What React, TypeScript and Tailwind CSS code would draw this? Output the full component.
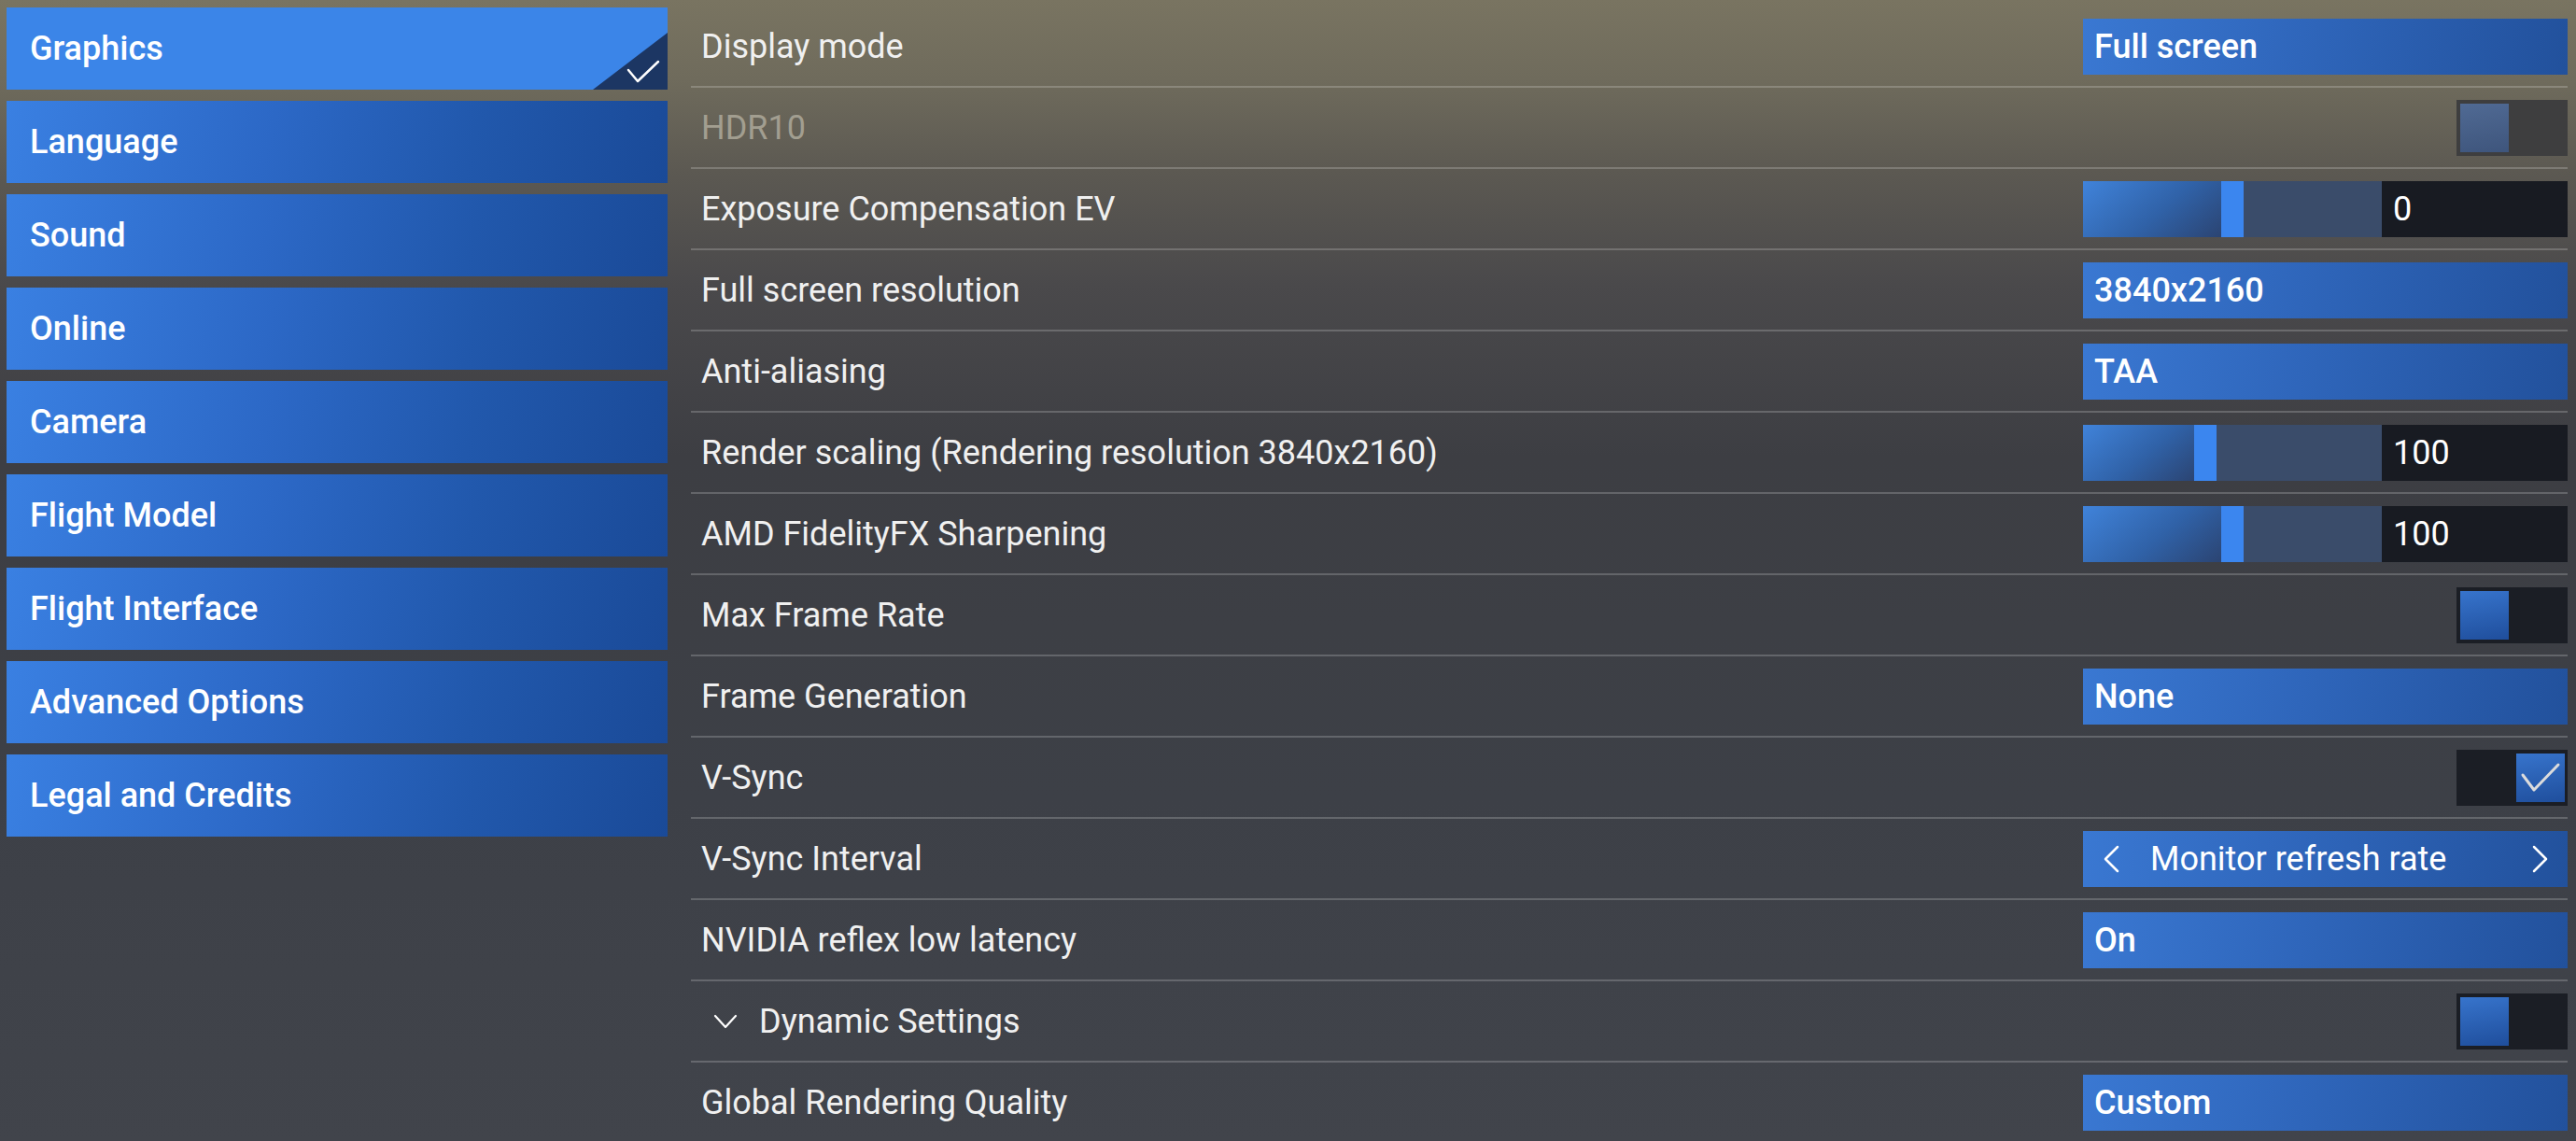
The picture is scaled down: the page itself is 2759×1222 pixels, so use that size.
import React from 'react';

type Row =
  | { kind: 'select'; label: string; value: string }
  | { kind: 'toggle'; label: string; on: boolean; disabled?: boolean }
  | { kind: 'slider'; label: string; thumb: number; value: string }
  | { kind: 'stepper'; label: string; value: string }
  | { kind: 'section'; label: string; on: boolean };

const menu = [
  'Graphics',
  'Language',
  'Sound',
  'Online',
  'Camera',
  'Flight Model',
  'Flight Interface',
  'Advanced Options',
  'Legal and Credits',
];

const rows: Row[] = [
  { kind: 'select', label: 'Display mode', value: 'Full screen' },
  { kind: 'toggle', label: 'HDR10', on: false, disabled: true },
  { kind: 'slider', label: 'Exposure Compensation EV', thumb: 148, value: '0' },
  { kind: 'select', label: 'Full screen resolution', value: '3840x2160' },
  { kind: 'select', label: 'Anti-aliasing', value: 'TAA' },
  { kind: 'slider', label: 'Render scaling (Rendering resolution 3840x2160)', thumb: 119, value: '100' },
  { kind: 'slider', label: 'AMD FidelityFX Sharpening', thumb: 148, value: '100' },
  { kind: 'toggle', label: 'Max Frame Rate', on: false },
  { kind: 'select', label: 'Frame Generation', value: 'None' },
  { kind: 'toggle', label: 'V-Sync', on: true },
  { kind: 'stepper', label: 'V-Sync Interval', value: 'Monitor refresh rate' },
  { kind: 'select', label: 'NVIDIA reflex low latency', value: 'On' },
  { kind: 'section', label: 'Dynamic Settings', on: false },
  { kind: 'select', label: 'Global Rendering Quality', value: 'Custom' },
];

function Toggle({ on, disabled }: { on: boolean; disabled?: boolean }) {
  return (
    <div
      className={`w-[119px] h-[60px] p-[4px] flex ${on ? 'justify-end pr-[3px]' : 'justify-start'} ${
        disabled ? 'bg-[#3e3e3f]' : 'bg-[#1b1e25]'
      }`}
    >
      <div
        className={`w-[52px] h-[52px] flex items-center justify-center ${
          disabled
            ? 'bg-[linear-gradient(170deg,#506a94,#3e557c)]'
            : 'bg-[linear-gradient(170deg,#3774cc,#1f4e9c)]'
        }`}
      >
        {on && (
          <svg width="52" height="52" viewBox="0 0 52 52" fill="none">
            <path d="M7 23 L19 39 L45 12" stroke="#dcdcdc" strokeWidth="3" strokeLinecap="round" strokeLinejoin="round" />
          </svg>
        )}
      </div>
    </div>
  );
}

function Slider({ thumb, value }: { thumb: number; value: string }) {
  return (
    <div className="w-[519px] h-[60px] flex">
      <div className="w-[320px] h-full flex bg-[#3a4c6a]">
        <div className="h-full bg-[linear-gradient(140deg,#4083da_0%,#3062a8_55%,#2b4472_100%)]" style={{ width: thumb }} />
        <div className="w-[24px] h-full bg-[#3b86ef]" />
      </div>
      <div className="flex-1 h-full bg-[#181b22] flex items-center pl-[12px] text-[36px] text-white">{value}</div>
    </div>
  );
}

function Select({ value }: { value: string }) {
  return (
    <div className="w-[519px] h-[60px] flex items-center pl-[12px] bg-[linear-gradient(100deg,#3a78d2_0%,#2f66bb_45%,#22519c_100%)] text-[36px] font-medium text-white">
      {value}
    </div>
  );
}

function Stepper({ value }: { value: string }) {
  return (
    <div className="w-[519px] h-[60px] flex items-center pl-[20px] pr-[19px] bg-[linear-gradient(100deg,#3a78d2_0%,#2f66bb_45%,#22519c_100%)] text-[36px] text-white">
      <svg width="20" height="30" viewBox="0 0 20 30" fill="none">
        <path d="M17 2 L4 15 L17 28" stroke="white" strokeWidth="2.5" strokeLinecap="round" strokeLinejoin="round" />
      </svg>
      <span className="ml-[32px] flex-1">{value}</span>
      <svg width="20" height="30" viewBox="0 0 20 30" fill="none">
        <path d="M3 2 L16 15 L3 28" stroke="white" strokeWidth="2.5" strokeLinecap="round" strokeLinejoin="round" />
      </svg>
    </div>
  );
}

export default function App() {
  return (
    <div className="w-[2759px] h-[1222px] overflow-hidden flex font-[Roboto,sans-serif] bg-[linear-gradient(180deg,#797461_0%,#6f6b5c_7%,#5c5952_15%,#4a494b_25%,#3d3e43_40%,#3d4047_70%,#41444b_100%)]">
      <div className="w-[740px] shrink-0 pl-[7px] pt-[8px] flex flex-col gap-[12px]">
        {menu.map((m, i) => (
          <div
            key={m}
            className={`relative w-[708px] h-[88px] flex items-center pl-[25px] text-[36px] font-medium text-white ${
              i === 0
                ? 'bg-[#3b85e8]'
                : 'bg-[linear-gradient(105deg,#3a80e2_0%,#2c68c6_40%,#2158ac_70%,#1a4a98_100%)]'
            }`}
          >
            {m}
            {i === 0 && (
              <svg className="absolute right-0 bottom-0" width="80" height="61" viewBox="0 0 80 61" fill="none">
                <polygon points="0,61 80,0 80,61" fill="#1c3663" />
                <path d="M38 40 L48 52 L70 31" stroke="white" strokeWidth="2.5" strokeLinecap="round" strokeLinejoin="round" />
              </svg>
            )}
          </div>
        ))}
      </div>

      <div className="flex-1 pr-[9px] pt-[7px]">
        {rows.map(r => (
          <div key={r.label} className="h-[87px] border-b-2 border-white/20 flex items-center justify-between pl-[11px]">
            {r.kind === 'section' ? (
              <div className="flex items-center text-[36px] text-[#f0f0f0]">
                <svg className="ml-[13px]" width="26" height="16" viewBox="0 0 26 16" fill="none">
                  <path d="M2 2 L13 14 L24 2" stroke="white" strokeWidth="2.2" strokeLinecap="round" strokeLinejoin="round" />
                </svg>
                <span className="ml-[23px]">{r.label}</span>
              </div>
            ) : (
              <span
                className={`text-[36px] ${
                  r.kind === 'toggle' && r.disabled ? 'text-[#a29e90]' : 'text-[#f0f0f0]'
                }`}
              >
                {r.label}
              </span>
            )}
            {r.kind === 'select' && <Select value={r.value} />}
            {r.kind === 'toggle' && <Toggle on={r.on} disabled={r.disabled} />}
            {r.kind === 'section' && <Toggle on={r.on} />}
            {r.kind === 'slider' && <Slider thumb={r.thumb} value={r.value} />}
            {r.kind === 'stepper' && <Stepper value={r.value} />}
          </div>
        ))}
      </div>
    </div>
  );
}
